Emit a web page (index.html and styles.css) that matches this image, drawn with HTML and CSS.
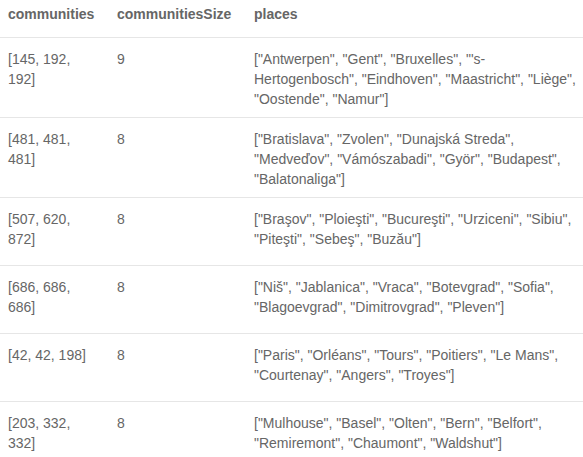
FILE: index.html
```html
<!DOCTYPE html>
<html>
<head>
<meta charset="utf-8">
<link rel="stylesheet" href="styles.css">
</head>
<body>
<div class="table">
  <div class="row head">
    <div class="cell">communities</div>
    <div class="cell">communitiesSize</div>
    <div class="cell places">places</div>
  </div>
  <div class="row">
    <div class="cell">[145, 192, 192]</div>
    <div class="cell">9</div>
    <div class="cell places">["Antwerpen", "Gent", "Bruxelles", "'s-Hertogenbosch", "Eindhoven", "Maastricht", "Liège", "Oostende", "Namur"]</div>
  </div>
  <div class="row">
    <div class="cell">[481, 481, 481]</div>
    <div class="cell">8</div>
    <div class="cell places">["Bratislava", "Zvolen", "Dunajská Streda", "Medveďov", "Vámószabadi", "Györ", "Budapest", "Balatonaliga"]</div>
  </div>
  <div class="row">
    <div class="cell">[507, 620, 872]</div>
    <div class="cell">8</div>
    <div class="cell places">["Braşov", "Ploieşti", "Bucureşti", "Urziceni", "Sibiu", "Piteşti", "Sebeş", "Buzău"]</div>
  </div>
  <div class="row">
    <div class="cell">[686, 686, 686]</div>
    <div class="cell">8</div>
    <div class="cell places">["Niš", "Jablanica", "Vraca", "Botevgrad", "Sofia", "Blagoevgrad", "Dimitrovgrad", "Pleven"]</div>
  </div>
  <div class="row">
    <div class="cell">[42, 42, 198]</div>
    <div class="cell">8</div>
    <div class="cell places">["Paris", "Orléans", "Tours", "Poitiers", "Le Mans", "Courtenay", "Angers", "Troyes"]</div>
  </div>
  <div class="row">
    <div class="cell">[203, 332, 332]</div>
    <div class="cell">8</div>
    <div class="cell places">["Mulhouse", "Basel", "Olten", "Bern", "Belfort", "Remiremont", "Chaumont", "Waldshut"]</div>
  </div>
</div>
</body>
</html>
```
FILE: styles.css
```css
html, body {
  margin: 0;
  padding: 0;
  background: #ffffff;
}
body {
  font-family: "Liberation Sans", Arial, sans-serif;
  font-size: 14px;
  line-height: 20px;
  color: #666666;
}
.table {
  display: flex;
  flex-direction: column;
}
.row {
  display: grid;
  grid-template-columns: 109px 137px 1fr;
  box-sizing: border-box;
  min-height: 68px;
  border-bottom: 1px solid #e6e6e6;
}
.row.head {
  min-height: 38px;
  font-weight: bold;
}
.cell {
  padding: 11px 8px 8px 8px;
}
.head .cell {
  padding: 4px 8px 13px 8px;
}
.cell.places {
  padding-right: 4px;
}
```
